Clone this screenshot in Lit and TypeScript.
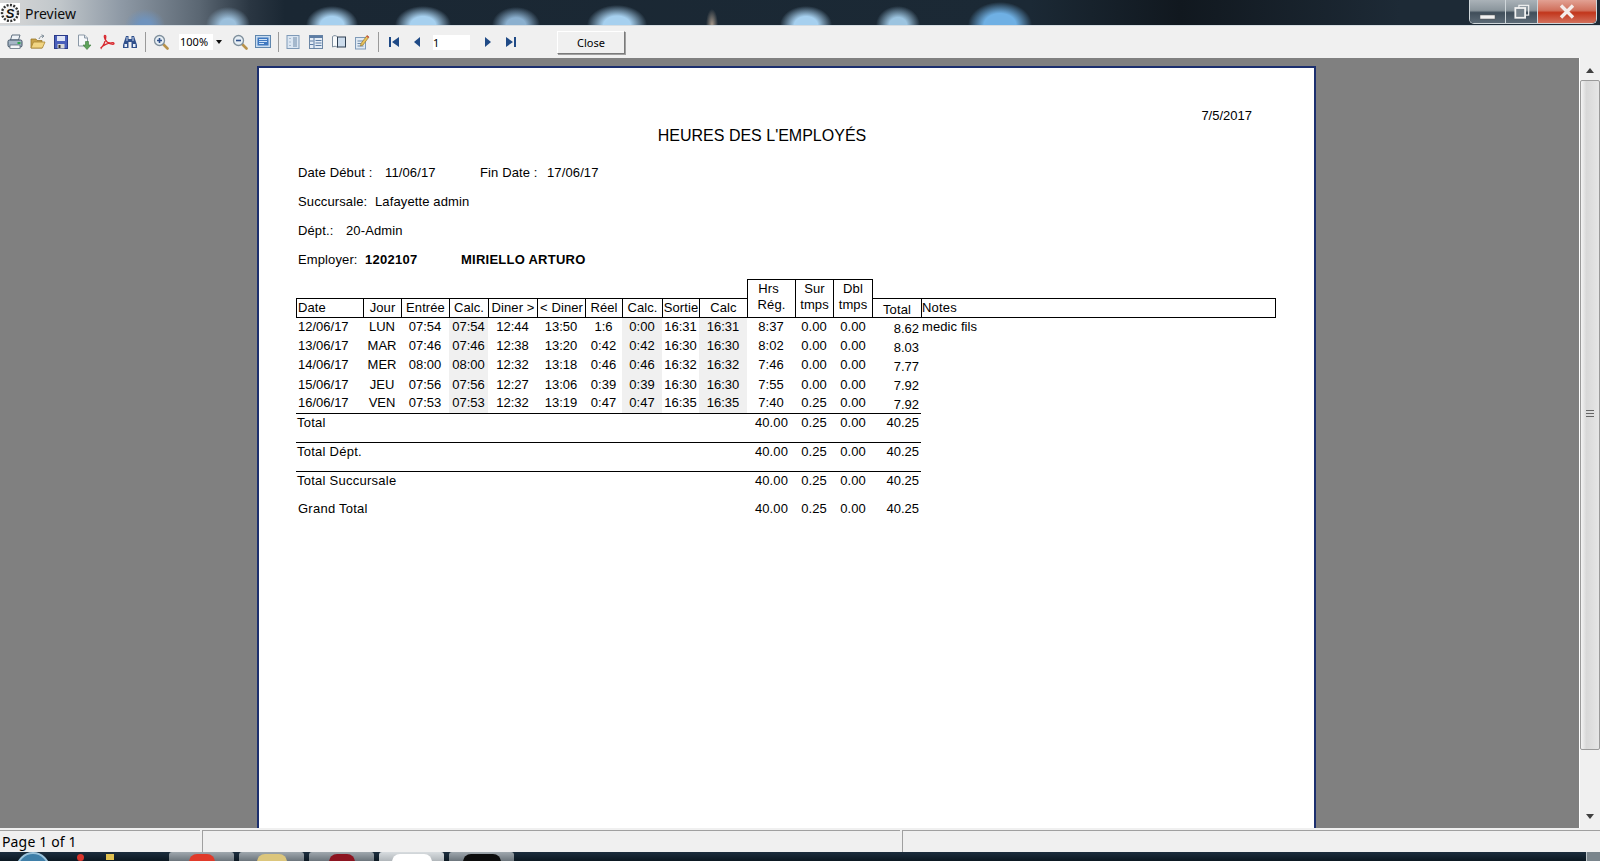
import { LitElement, css, html, svg } from 'lit';
import { customElement } from 'lit/decorators.js';

const ROWS = [
  ['12/06/17', 'LUN', '07:54', '07:54', '12:44', '13:50', '1:6', '0:00', '16:31', '16:31', '8:37', '0.00', '0.00', '8.62', 'medic fils'],
  ['13/06/17', 'MAR', '07:46', '07:46', '12:38', '13:20', '0:42', '0:42', '16:30', '16:30', '8:02', '0.00', '0.00', '8.03', ''],
  ['14/06/17', 'MER', '08:00', '08:00', '12:32', '13:18', '0:46', '0:46', '16:32', '16:32', '7:46', '0.00', '0.00', '7.77', ''],
  ['15/06/17', 'JEU', '07:56', '07:56', '12:27', '13:06', '0:39', '0:39', '16:30', '16:30', '7:55', '0.00', '0.00', '7.92', ''],
  ['16/06/17', 'VEN', '07:53', '07:53', '12:32', '13:19', '0:47', '0:47', '16:35', '16:35', '7:40', '0.25', '0.00', '7.92', ''],
];

const HEAD = ['Date', 'Jour', 'Entrée', 'Calc.', 'Diner >', '< Diner', 'Réel', 'Calc.', 'Sortie', 'Calc'];
const SHADED = new Set([3, 7, 9]);

const TOTALS = [
  { label: 'Total', ruled: true, cls: 'first' },
  { label: 'Total Dépt.', ruled: true, cls: 'pad' },
  { label: 'Total Succursale', ruled: false, cls: 'pad' },
  { label: 'Grand Total', ruled: false, cls: 'pad grand' },
];

const icon = (body: unknown) =>
  html`<span class="slot"><svg width="16" height="16" viewBox="0 0 16 16">${body}</svg></span>`;

const lens = (mark: unknown) => svg`
  <path d="M10 10l4.500 4.500" stroke="#b9924a" stroke-width="2.600" stroke-linecap="round"/>
  <circle cx="6.500" cy="6.500" r="5" fill="#e6eef4" stroke="#7f8f9c" stroke-width="1.300"/>
  ${mark}`;

const ICONS = {
  print: svg`
    <path d="M5 1h8l-1.500 5h-8z" fill="#eef2f6" stroke="#5f6f7f"/>
    <rect x="1" y="6" width="14" height="7" rx="1.500" fill="#a6b6c6" stroke="#3f5163"/>
    <rect x="3" y="11" width="10" height="3.500" fill="#f4f6f8" stroke="#4c5c6c" stroke-width=".7"/>
    <rect x="10.500" y="8" width="3" height="2" fill="#2fa84f"/>`,
  open: svg`
    <path d="M1 5h5l1 1.500h5V14H1z" fill="#c9a24a" stroke="#9a7a2c" stroke-width=".8"/>
    <path d="M3.500 8H15l-2.600 6H1z" fill="#f1d583" stroke="#a98734" stroke-width=".8"/>
    <path d="M9 5c.5-2 2.300-3 4-3M11.500 .8L14 2l-2 1.800" fill="none" stroke="#7d8b97" stroke-width="1"/>`,
  save: svg`
    <rect x="1.500" y="1.500" width="13" height="13" fill="#4a5fbb" stroke="#2a3a88"/>
    <rect x="4" y="2" width="8" height="5" fill="#dfe5f6"/>
    <rect x="4.500" y="10" width="7" height="4.500" fill="#d8d8d8"/>
    <rect x="5.500" y="11" width="2" height="3" fill="#333"/>`,
  export: svg`
    <path d="M2.500 1h6l3 3v8h-9z" fill="#f6f8fb" stroke="#8b98a6"/>
    <path d="M8.500 1v3h3" fill="#dde4ea" stroke="#8b98a6"/>
    <path d="M9.500 7.500h3v3.500H15l-4 4.500-4-4.500h2.500z" fill="#5da25a" stroke="#3a7a3a" stroke-width=".6"/>`,
  pdf: svg`
    <path d="M1.500 14.200C4 13 7 6.500 6.800 2.500 6.700 .8 5 1 5.300 3c.5 3.500 4 7.200 8.700 7.300 1.400 0 1.400-1.600-.4-1.600C10 8.700 4 11 2.500 13.500c-.6 1 0 1.400 0 1.400" fill="none" stroke="#d8262c" stroke-width="1.300"/>`,
  binoc: svg`
    <path d="M4 2h2.500v3H9.500V2H12l3 9v3H9.500V8h-3v6H1v-3z" fill="#30508c"/>
    <rect x="2.500" y="10" width="2.500" height="3" fill="#e8eef8"/>
    <rect x="11" y="10" width="2.500" height="3" fill="#e8eef8"/>
    <rect x="4.500" y="3" width="1" height="4" fill="#c8d6ee"/>
    <rect x="10.500" y="3" width="1" height="4" fill="#c8d6ee"/>`,
  zoomIn: lens(svg`<path d="M4 6.500h5M6.500 4v5" stroke="#30508c" stroke-width="1.600"/>`),
  zoomOut: lens(svg`<path d="M4 6.500h5" stroke="#30508c" stroke-width="1.600"/>`),
  pageWidth: svg`
    <rect x=".5" y="1.500" width="15" height="12" fill="#c9dcf0" stroke="#5f86ad"/>
    <rect x="2.500" y="3.500" width="11" height="8" fill="#3f78c0"/>
    <path d="M4 5.500h8M4 7.500h8M4 9.500h5" stroke="#cfe2f6"/>`,
  onePage: svg`
    <rect x="2" y="1.500" width="12" height="13" fill="#dbe6f2" stroke="#7f9ab8"/>
    <path d="M8 4h4M8 6h4M8 8h4M8 10h4M8 12h4" stroke="#6f8aa8"/>
    <path d="M4 4.500h2M4 8h2M4 11.500h2" stroke="#a8bbd0"/>`,
  twoPage: svg`
    <rect x="1.500" y="1.500" width="13" height="13" fill="#e4ecf5" stroke="#6b86a5"/>
    <rect x="1.500" y="1.500" width="13" height="2.500" fill="#5d7da5"/>
    <path d="M6 1.500v13M7.500 6.500h6M7.500 9h6M7.500 11.500h6M2 7h3.500M2 10.500h3.500" stroke="#5d7da5"/>`,
  book: svg`
    <path d="M1.500 2.500C3.500 1 5 1.500 6.500 3v10.500C5 12 3.500 12 1.500 13z" fill="#f8fafb" stroke="#7c8c9c"/>
    <rect x="6.500" y="3" width="8" height="10" fill="#cddcec" stroke="#2f3f52"/>`,
  edit: svg`
    <rect x="1.500" y="3.500" width="10" height="11.500" fill="#dfe9f3" stroke="#7f9ab8"/>
    <path d="M3.500 7h6M3.500 9.500h6M3.500 12h6" stroke="#6f8aa8"/>
    <path d="M7 9.500L13 1.500l2 1.500-6 8-2.500 1z" fill="#e9c35c" stroke="#9a7a2c" stroke-width=".7"/>
    <path d="M13 1.500l2 1.500-.8 1-2-1.500z" fill="#cf4a4a"/>`,
  first: svg`<path d="M3 3h2v10H3zM13 3v10L6 8z" fill="#1f4a86"/>`,
  prev: svg`<path d="M11 3v10L5 8z" fill="#1f4a86"/>`,
  next: svg`<path d="M5 3v10l6-5z" fill="#1f4a86"/>`,
  last: svg`<path d="M3 3v10l7-5zM11 3h2v10h-2z" fill="#1f4a86"/>`,
};

@customElement('app-root')
export class AppRoot extends LitElement {
  static styles = css`
    :host {
      display: flex;
      flex-direction: column;
      width: 1600px;
      height: 861px;
      overflow: hidden;
      font-family: 'Liberation Sans', Arial, sans-serif;
      color: #000;
    }

    /* title bar */
    .titlebar {
      flex: none;
      height: 25px;
      display: flex;
      align-items: center;
      justify-content: space-between;
      border-bottom: 1px solid #d6dde2;
      background:
        radial-gradient(ellipse 20px 16px at 145px 100%, #6f93bd 0, #6f93bd 30%, transparent 100%),
        radial-gradient(ellipse 22px 18px at 228px 100%, #9cc0dc 0, #9cc0dc 35%, transparent 100%),
        radial-gradient(ellipse 26px 19px at 332px 100%, #a6d0ef 0, #a6d0ef 45%, transparent 100%),
        radial-gradient(ellipse 28px 19px at 423px 100%, #a6d0ef 0, #a6d0ef 45%, transparent 100%),
        radial-gradient(ellipse 24px 18px at 516px 100%, #8bb0cf 0, #8bb0cf 40%, transparent 100%),
        radial-gradient(ellipse 30px 20px at 617px 100%, #a6d0ef 0, #a6d0ef 45%, transparent 100%),
        radial-gradient(ellipse 6px 16px at 712px 100%, #a89a8c, transparent),
        radial-gradient(ellipse 26px 19px at 806px 100%, #a6d0ef 0, #a6d0ef 45%, transparent 100%),
        radial-gradient(ellipse 22px 19px at 898px 100%, #9cc4e0 0, #9cc4e0 40%, transparent 100%),
        radial-gradient(ellipse 32px 23px at 1000px 100%, #6fb0e4 0, #6fb0e4 50%, transparent 100%),
        linear-gradient(90deg, #d8d8d8 0, #c0c6ca 60px, #8f9aa6 120px, #5a6672 200px, #2a3642 250px, #1a2733 285px, #1b2935 1030px, #11181f 1180px, #1d2a36 1400px, #1d2a36 100%);
    }
    .title-left { display: flex; align-items: center; height: 25px; }
    .logo { width: 20px; height: 20px; margin-top: 1px; background: #fff; }
    .title-text {
      margin: 1px 0 0 5px;
      font-family: 'Noto Sans', sans-serif;
      font-size: 14px;
      color: #0c0c0c;
    }
    .winbtns {
      display: flex;
      align-self: flex-start;
      height: 23px;
      margin-right: 3px;
      border: 1px solid #cfd6da;
      border-top: none;
      border-radius: 0 0 5px 5px;
      overflow: hidden;
    }
    .winbtn { display: flex; align-items: center; justify-content: center; box-sizing: border-box; }
    .min, .max {
      background: linear-gradient(180deg, #aab2b8 0, #8a959c 45%, #404e5a 55%, #5c6a76 100%);
      border-right: 1px solid #cfd6da;
    }
    .min { width: 36px; }
    .max { width: 32px; }
    .close-x {
      width: 58px;
      background: linear-gradient(180deg, #e2a193 0, #d0705c 45%, #c2361c 55%, #d3705c 100%);
    }

    /* toolbar */
    .toolbar {
      flex: none;
      height: 32px;
      display: flex;
      align-items: center;
      box-sizing: border-box;
      padding-left: 3px;
      background: #f0f0f0;
    }
    .slot { flex: none; width: 23px; height: 16px; display: flex; justify-content: center; }
    .sep { flex: none; width: 1px; height: 20px; margin: 0 3px 0 4px; background: #9a9a9a; }
    .sep.tight { margin: 0 2px 0 4px; }
    .sep.nav { margin: 0 3px 0 5px; }
    .combo {
      flex: none;
      width: 46px;
      height: 16px;
      margin: 0 3px 0 7px;
      display: flex;
      background: #fff;
      font-family: 'Noto Sans', sans-serif;
      font-size: 11px;
      line-height: 16px;
    }
    .combo span { flex: 1; padding-left: 1px; }
    .combo i {
      flex: none;
      width: 12px;
      background: #f0f0f0;
      display: flex;
      align-items: center;
      justify-content: center;
    }
    .combo i::after {
      content: '';
      border: 3px solid transparent;
      border-top: 4px solid #111;
      border-bottom: none;
    }
    .pageno {
      flex: none;
      width: 37px;
      height: 15px;
      margin: 0 6px 0 5px;
      box-sizing: border-box;
      background: #fff;
      font-family: 'Noto Sans', sans-serif;
      font-size: 11px;
      line-height: 15px;
    }
    .closebtn {
      flex: none;
      width: 68px;
      height: 23px;
      margin-left: 35px;
      box-sizing: border-box;
      border: 1px solid;
      border-color: #fff #7a7a7a #7a7a7a #fff;
      box-shadow: 1px 1px 0 #a0a0a0;
      text-align: center;
      font-family: 'Noto Sans', sans-serif;
      font-size: 11px;
      line-height: 22px;
    }

    /* viewer */
    .main { flex: none; height: 770px; display: flex; }
    .viewer {
      flex: 1;
      overflow: hidden;
      background: #808080;
      padding: 8px 0 0 257px;
    }
    .page {
      width: 1059px;
      height: 770px;
      box-sizing: border-box;
      background: #fff;
      border: 2px solid #1c2f6e;
      border-bottom: none;
      padding: 40px 0 0 37px;
      font-size: 13px;
      line-height: 16px;
    }
    .report { width: 980px; }
    .date { text-align: right; padding-right: 24px; }
    .title { margin: 2px 48px 0 0; text-align: center; font-size: 16px; line-height: 20px; }
    .info { margin: 12px 0 5px; padding-left: 2px; letter-spacing: 0.12px; }
    .info div { display: flex; height: 29px; align-items: center; }
    .info b { font-weight: 700; letter-spacing: 0.25px; }
    .w87 { width: 87px; }
    .w95 { width: 95px; }
    .w67 { width: 67px; }
    .w77 { width: 77px; }
    .w48 { width: 48px; }
    .w96 { width: 96px; }

    .cols {
      display: grid;
      grid-template-columns: 67px 38px 48px 39px 49px 48px 37px 40px 37px 48px 48px 38px 40px 48px 355px;
    }
    .head { grid-template-rows: 19px 20px; height: 39px; }
    .hc {
      grid-row: 2;
      box-sizing: border-box;
      border: 1px solid #000;
      border-width: 1px 0 1px 1px;
      text-align: center;
      line-height: 17px;
      white-space: nowrap;
      letter-spacing: 0.1px;
    }
    .hc.left { text-align: left; padding-left: 1px; }
    .hc.tall { grid-row: 1 / span 2; line-height: 16px; padding-top: 1px; }
    .hrs { display: inline-block; margin-right: 6px; }
    .hc.dbl { border-right-width: 1px; }
    .hc.total { border-left: none; padding-top: 2px; }
    .hc.notes { border-right-width: 1px; padding-left: 0; letter-spacing: 0.2px; }

    .body { width: 625px; border-bottom: 1px solid #000; }
    .body .cols { height: 19px; }
    .c { box-sizing: border-box; height: 19px; padding-top: 1px; text-align: center; white-space: nowrap; }
    .row4 .c { padding-top: 2px; }
    .c.left { text-align: left; padding-left: 2px; }
    .c.shade { background: #f0f0f0; }
    .body .c.num { text-align: right; padding: 3px 2px 0 0; }
    .c.note { padding-left: 1px; letter-spacing: 0.1px; }
    .row-note { width: 980px; }

    .sum { width: 625px; box-sizing: border-box; }
    .sum.rule { border-bottom: 1px solid #000; height: 29px; }
    .sum.plain { height: 28px; }
    .sum.first, .sum.pad { padding-top: 1px; }
    .sum .lab { grid-column: 1 / span 10; padding-left: 1px; letter-spacing: 0.25px; }
    .sum.grand .lab { padding-left: 2px; }
    .sum .r1 { text-align: right; padding-right: 7px; letter-spacing: 0.1px; }
    .sum .r2 { text-align: center; }
    .sum .r3 { text-align: right; padding-right: 2px; }

    /* scrollbar */
    .scroll {
      flex: none;
      width: 21px;
      box-sizing: border-box;
      border-left: 1px solid #fff;
      background: #f0f0f0;
      display: flex;
      flex-direction: column;
    }
    .sbtn { flex: none; height: 22px; display: flex; align-items: center; justify-content: center; }
    .sbtn.up::after, .sbtn.down::after {
      content: '';
      border: 4px solid transparent;
    }
    .sbtn.up::after { border-top: none; border-bottom: 5px solid #404040; margin-top: 2px; }
    .sbtn.down::after { border-bottom: none; border-top: 5px solid #404040; margin-bottom: 1px; }
    .thumb {
      flex: none;
      height: 670px;
      box-sizing: border-box;
      border: 1px solid #9a9a9a;
      border-radius: 2px;
      background: linear-gradient(90deg, #f4f4f4, #d8d8d8 30%, #e6e6e6);
      display: flex;
      align-items: center;
      justify-content: center;
    }
    .thumb i {
      width: 8px;
      height: 7px;
      margin-bottom: 4px;
      border-top: 1px solid #666;
      border-bottom: 1px solid #666;
      position: relative;
      box-sizing: border-box;
    }
    .thumb i::after { content: ''; position: absolute; left: 0; right: 0; top: 2px; height: 1px; background: #666; }
    .track { flex: 1; }

    /* status */
    .status {
      flex: none;
      height: 24px;
      box-sizing: border-box;
      padding-top: 2px;
      background: #f0f0f0;
      display: flex;
      font-family: 'Noto Sans', sans-serif;
      font-size: 14px;
      letter-spacing: 0.15px;
    }
    .panel { border-top: 1px solid #a0a0a0; box-sizing: border-box; height: 22px; line-height: 22px; }
    .p1 { width: 200px; padding-left: 2px; margin-right: 2px; }
    .p2 { width: 698px; border-left: 1px solid #a0a0a0; margin-right: 2px; }
    .p3 { flex: 1; border-left: 1px solid #a0a0a0; }

    /* taskbar */
    .taskbar {
      flex: none;
      height: 9px;
      display: flex;
      overflow: hidden;
      background: linear-gradient(180deg, #1c2e3e, #0c1822);
    }
    .orb { flex: none; width: 34px; height: 34px; margin-left: 16px; border-radius: 50%; background: #3f7fa8; border: 2px solid #9cc4dc; box-sizing: border-box; }
    .tray-a { flex: none; width: 7px; height: 7px; margin: 2px 0 0 27px; border-radius: 50%; background: #d9352c; }
    .tray-b { flex: none; width: 8px; height: 6px; margin: 2px 0 0 22px; background: #e0c050; }
    .tbtn {
      flex: none;
      width: 65px;
      height: 9px;
      margin-right: 5px;
      border-radius: 3px 3px 0 0;
      background: linear-gradient(180deg, #a0a8ae, #6c757c);
      display: flex;
      justify-content: center;
    }
    .tbtn.first { margin-left: 55px; }
    .tbtn i { display: block; margin-top: 2px; border-radius: 10px 10px 0 0; }
    .i-red { width: 26px; height: 8px; background: #e03a2a; }
    .i-folder { width: 30px; height: 8px; background: #dcc67c; border-radius: 2px 2px 0 0; }
    .i-maroon { width: 26px; height: 8px; background: #8c1420; }
    .i-clock { width: 40px; height: 8px; background: #fff; border-radius: 0; }
    .i-black { width: 38px; height: 8px; background: #0c0c0c; border-radius: 2px 2px 0 0; }
    .tbtn.light { background: linear-gradient(180deg, #d8dcdf, #b0b6ba); }
    .task-fill { flex: 1; }
    .corner { flex: none; width: 14px; background: #7a858c; border-left: 1px solid #c0c8cc; box-sizing: border-box; }
  `;

  private renderHead() {
    return html`
      <div class="cols head">
        ${HEAD.map(
          (h, i) => html`<div class="hc ${i === 0 ? 'left' : ''}">${h}</div>`,
        )}
        <div class="hc tall"><span class="hrs">Hrs</span><br />Rég.</div>
        <div class="hc tall">Sur<br />tmps</div>
        <div class="hc tall dbl">Dbl<br />tmps</div>
        <div class="hc total">Total</div>
        <div class="hc left notes">Notes</div>
      </div>
    `;
  }

  private renderRows() {
    return html`
      <div class="body">
        ${ROWS.map(
          (row, n) => html`
            <div class="cols row-note ${n === 3 ? 'row4' : ''}">
              ${row.map((v, i) => {
                if (i === 13) return html`<div class="c num">${v}</div>`;
                if (i === 14) return html`<div class="c left note">${v}</div>`;
                return html`<div class="c ${i === 0 ? 'left' : ''} ${SHADED.has(i) ? 'shade' : ''}">${v}</div>`;
              })}
            </div>
          `,
        )}
      </div>
    `;
  }

  private renderTotals() {
    return TOTALS.map(
      (t) => html`
        <div class="cols sum ${t.ruled ? 'rule' : 'plain'} ${t.cls}">
          <div class="lab">${t.label}</div>
          <div class="r1">40.00</div>
          <div class="r2">0.25</div>
          <div class="r2">0.00</div>
          <div class="r3">40.25</div>
        </div>
      `,
    );
  }

  render() {
    return html`
      <div class="titlebar">
        <div class="title-left">
          <svg class="logo" viewBox="0 0 20 20">
            <circle cx="10" cy="10" r="8" fill="#f4f4f4" stroke="#333" stroke-width="2.400" stroke-dasharray="2 1.400" />
            <text x="10" y="14.500" text-anchor="middle" font-family="Liberation Sans" font-weight="700" font-style="italic" font-size="13" fill="#111">S</text>
          </svg>
          <span class="title-text">Preview</span>
        </div>
        <div class="winbtns">
          <div class="winbtn min">
            <svg width="16" height="16" viewBox="0 0 16 16"><rect x="0" y="11" width="15" height="4" fill="#f2f2f2" stroke="#555" stroke-width=".5" /></svg>
          </div>
          <div class="winbtn max">
            <svg width="16" height="16" viewBox="0 0 18 18">
              <rect x="5.500" y="1.500" width="11" height="11" fill="none" stroke="#f2f2f2" stroke-width="1.300" />
              <rect x="1.500" y="4.500" width="11" height="11" fill="#77838c" stroke="#f2f2f2" stroke-width="2" />
            </svg>
          </div>
          <div class="winbtn close-x">
            <svg width="16" height="15" viewBox="0 0 16 15"><path d="M2 1.500l12 12M14 1.500l-12 12" stroke="#f4ecea" stroke-width="3.400" /></svg>
          </div>
        </div>
      </div>

      <div class="toolbar">
        ${icon(ICONS.print)}${icon(ICONS.open)}${icon(ICONS.save)}${icon(ICONS.export)}${icon(ICONS.pdf)}${icon(ICONS.binoc)}
        <div class="sep"></div>
        ${icon(ICONS.zoomIn)}
        <div class="combo"><span>100%</span><i></i></div>
        ${icon(ICONS.zoomOut)}${icon(ICONS.pageWidth)}
        <div class="sep tight"></div>
        ${icon(ICONS.onePage)}${icon(ICONS.twoPage)}${icon(ICONS.book)}${icon(ICONS.edit)}
        <div class="sep nav"></div>
        ${icon(ICONS.first)}${icon(ICONS.prev)}
        <div class="pageno">1</div>
        ${icon(ICONS.next)}${icon(ICONS.last)}
        <div class="closebtn">Close</div>
      </div>

      <div class="main">
        <div class="viewer">
          <div class="page">
            <div class="report">
              <div class="date">7/5/2017</div>
              <div class="title">HEURES DES L'EMPLOYÉS</div>
              <div class="info">
                <div>
                  <span class="w87">Date Début :</span><span class="w95">11/06/17</span>
                  <span class="w67">Fin Date :</span><span>17/06/17</span>
                </div>
                <div><span class="w77">Succursale:</span><span>Lafayette admin</span></div>
                <div><span class="w48">Dépt.:</span><span>20-Admin</span></div>
                <div>
                  <span class="w67">Employer:</span><b class="w96">1202107</b><b>MIRIELLO ARTURO</b>
                </div>
              </div>
              ${this.renderHead()}
              ${this.renderRows()}
              ${this.renderTotals()}
            </div>
          </div>
        </div>
        <div class="scroll">
          <div class="sbtn up"></div>
          <div class="thumb"><i></i></div>
          <div class="track"></div>
          <div class="sbtn down"></div>
        </div>
      </div>

      <div class="status">
        <div class="panel p1">Page 1 of 1</div>
        <div class="panel p2"></div>
        <div class="panel p3"></div>
      </div>

      <div class="taskbar">
        <div class="orb"></div>
        <div class="tray-a"></div>
        <div class="tray-b"></div>
        <div class="tbtn first"><i class="i-red"></i></div>
        <div class="tbtn"><i class="i-folder"></i></div>
        <div class="tbtn"><i class="i-maroon"></i></div>
        <div class="tbtn light"><i class="i-clock"></i></div>
        <div class="tbtn"><i class="i-black"></i></div>
        <div class="task-fill"></div>
        <div class="corner"></div>
      </div>
    `;
  }
}
